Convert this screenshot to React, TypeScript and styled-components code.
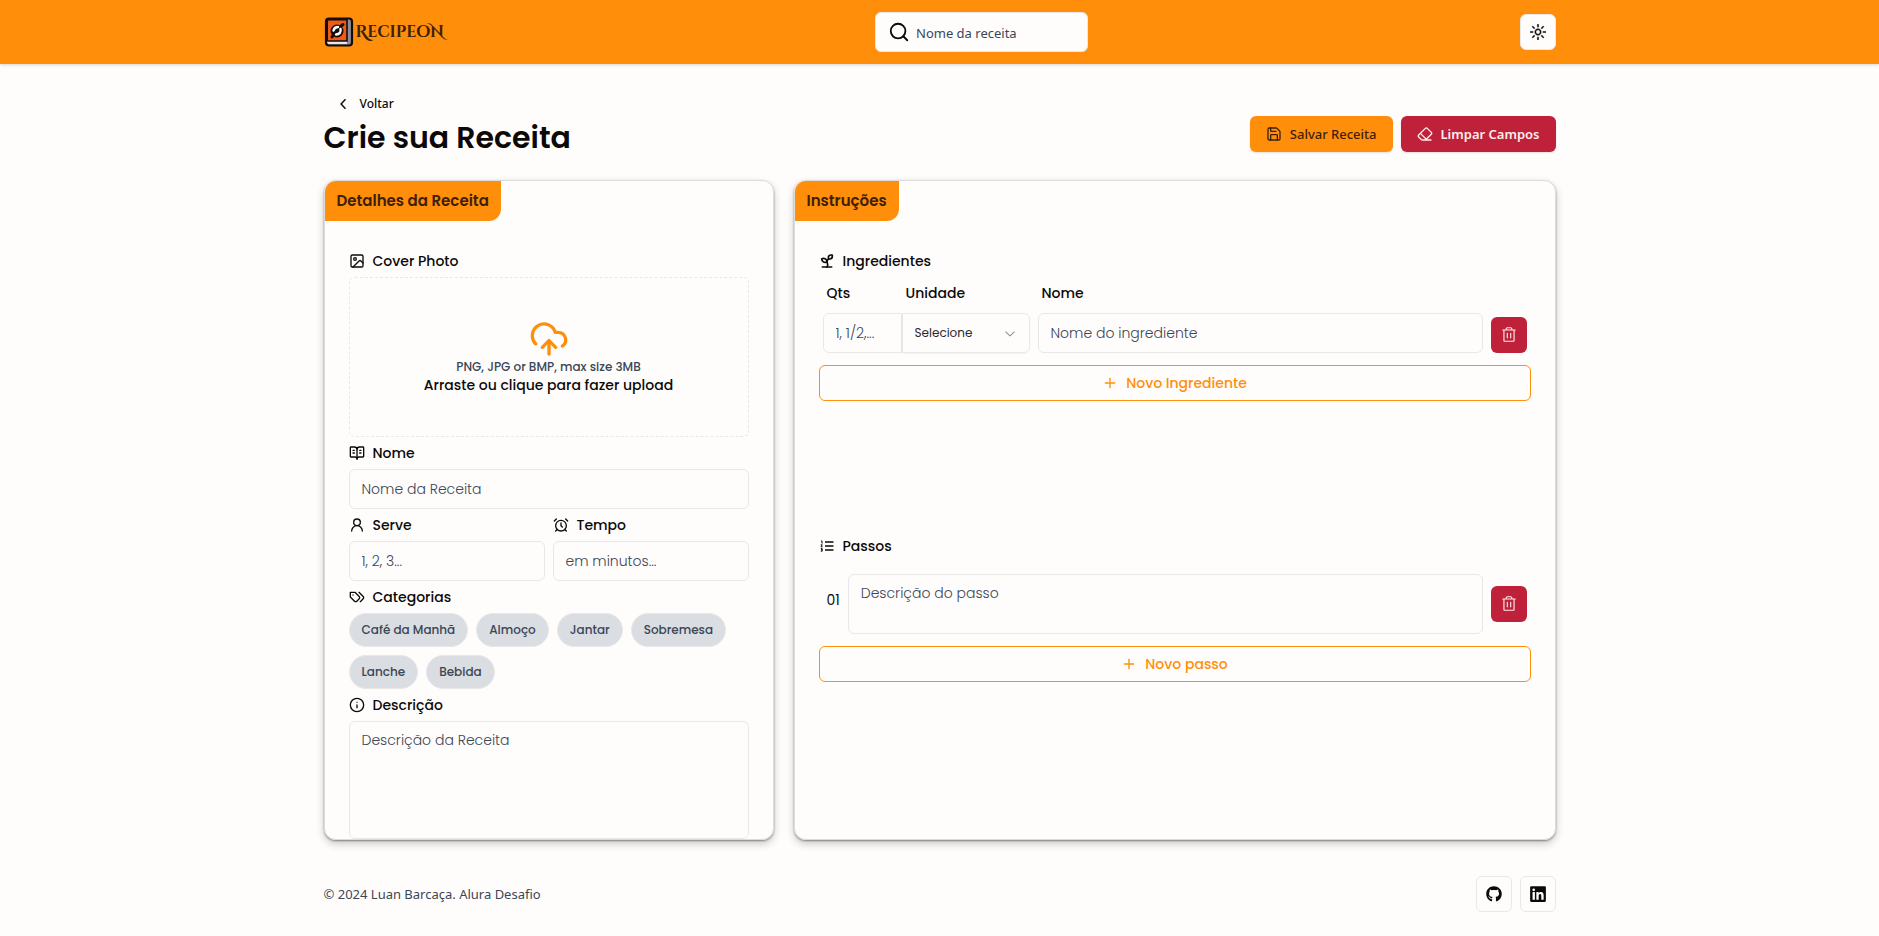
import React from "react";
import styled, { createGlobalStyle, css } from "styled-components";
import {
  AlarmClock,
  BookOpenText,
  CloudUpload,
  Eraser,
  Image as ImageIcon,
  Info,
  Plus,
  Save,
  Search,
  Sprout,
  UserRound,
} from "lucide-react";
import { RxChevronDown, RxChevronLeft, RxSun } from "react-icons/rx";
import { PiTrash } from "react-icons/pi";
import { FaGithub, FaLinkedin } from "react-icons/fa";

const color = {
  background: "#fffdfc",
  text: "#0c0a09",
  muted: "#3b4656",
  border: "#e9e8e8",
  primary: "#ff8f0b",
  onPrimary: "#3f2008",
  danger: "#be2139",
  onDanger: "#fdeeee",
  chip: "#dadde2",
};

const display = `Poppins, Inter, "Noto Sans", sans-serif`;
const ui = `"Segoe UI", "Noto Sans", sans-serif`;

const GlobalStyle = createGlobalStyle`
  *, *::before, *::after { box-sizing: border-box; }
  body {
    margin: 0;
    background: ${color.background};
    color: ${color.text};
    font-family: ${ui};
    font-size: 14px;
    line-height: 20px;
  }
  button, input, select, textarea { font: inherit; color: inherit; margin: 0; }
  button { cursor: pointer; }
  svg { flex-shrink: 0; display: block; }
  h1, h2, p { margin: 0; }
`;

const Container = styled.div`
  width: 100%;
  max-width: 1280px;
  margin: 0 auto;
  padding: 0 24px;
`;

const Header = styled.header`
  background: ${color.primary};
  box-shadow: 0 1px 3px rgba(0, 0, 0, 0.16);
`;

const HeaderBar = styled(Container)`
  display: flex;
  align-items: center;
  justify-content: space-between;
  height: 64px;
`;

const Brand = styled.a`
  display: flex;
  align-items: center;
  gap: 2px;
  width: 120px;
  color: ${color.onPrimary};
  text-decoration: none;
  font-family: "Cinzel Decorative", "Liberation Serif", serif;
  font-size: 16px;
  font-weight: 700;
`;

const SearchBox = styled.label`
  display: flex;
  align-items: center;
  gap: 6px;
  width: 213px;
  height: 40px;
  padding: 0 12px;
  border: 1px solid ${color.border};
  border-radius: 6px;
  background: ${color.background};
`;

const SearchInput = styled.input`
  min-width: 0;
  flex: 1;
  padding: 2px 0 0;
  border: 0;
  outline: 0;
  background: transparent;
  font-size: 13px;
  &::placeholder { color: ${color.muted}; opacity: 1; }
`;

const iconBox = css`
  display: flex;
  align-items: center;
  justify-content: center;
  width: 36px;
  height: 36px;
  flex-shrink: 0;
  padding: 0;
  border-radius: 6px;
`;

const IconButton = styled.button`
  ${iconBox}
  border: 1px solid ${color.border};
  background: ${color.background};
`;

const IconLink = styled.a`
  ${iconBox}
  border: 1px solid ${color.border};
  color: ${color.text};
`;

const DeleteButton = styled.button`
  ${iconBox}
  border: 0;
  background: ${color.danger};
  color: ${color.onDanger};
`;

const Heading = styled.div`
  display: flex;
  align-items: flex-end;
  justify-content: space-between;
  padding: 26px 0 22px;
`;

const BackLink = styled.a`
  display: flex;
  align-items: center;
  gap: 8px;
  height: 28px;
  padding-left: 12px;
  color: ${color.text};
  text-decoration: none;
  font-size: 12px;
  font-weight: 500;
`;

const Title = styled.h1`
  font-family: ${display};
  font-size: 30px;
  font-weight: 600;
  line-height: 40px;
`;

const Actions = styled.div`
  display: flex;
  gap: 8px;
`;

const HeadingActions = styled(Actions)`
  padding-bottom: 6px;
`;

const ActionButton = styled.button<{ $danger?: boolean }>`
  display: flex;
  align-items: center;
  gap: 8px;
  height: 36px;
  padding: 0 16px;
  border: 0;
  border-radius: 6px;
  box-shadow: 0 1px 2px rgba(0, 0, 0, 0.12);
  font-size: 13px;
  font-weight: ${(p) => (p.$danger ? 600 : 500)};
  background: ${(p) => (p.$danger ? color.danger : color.primary)};
  color: ${(p) => (p.$danger ? color.onDanger : color.onPrimary)};
`;

const Panels = styled.form`
  display: grid;
  grid-template-columns: 450fr 762fr;
  gap: 20px;
`;

const Card = styled.section`
  height: 660px;
  overflow: hidden;
  border: 1px solid #dcdcdc;
  border-radius: 12px;
  font-family: ${display};
  box-shadow: 0 1px 2px rgba(0, 0, 0, 0.4), 0 4px 8px rgba(0, 0, 0, 0.2);
`;

const CardTitle = styled.h2`
  width: fit-content;
  padding: 0 12px;
  border-bottom-right-radius: 12px;
  background: ${color.primary};
  color: ${color.onPrimary};
  font-size: 15px;
  font-weight: 600;
  line-height: 40px;
`;

const CardBody = styled.div`
  display: flex;
  flex-direction: column;
  gap: 4px;
  padding: 28px 24px 0;
`;

const Section = styled.div`
  height: 281px;
`;

const Label = styled.label`
  display: flex;
  align-items: center;
  gap: 8px;
  height: 24px;
  font-size: 14px;
  font-weight: 500;
`;

const Field = styled.div`
  display: flex;
  flex-direction: column;
  gap: 4px;
`;

const FieldPair = styled.div`
  display: grid;
  grid-template-columns: 1fr 1fr;
  gap: 8px;
`;

const inputLook = css`
  width: 100%;
  min-width: 0;
  padding: 0 12px;
  border: 1px solid ${color.border};
  border-radius: 6px;
  outline: 0;
  background: transparent;
  font-size: 14px;
  &::placeholder { color: ${color.muted}; opacity: 1; font-weight: 300; }
`;

const TextInput = styled.input`
  ${inputLook}
  height: 40px;
`;

const TextArea = styled.textarea<{ $height: number }>`
  ${inputLook}
  display: block;
  height: ${(p) => p.$height}px;
  padding-top: 8px;
  resize: none;
`;

const DropZone = styled.button`
  display: flex;
  flex-direction: column;
  align-items: center;
  justify-content: center;
  height: 160px;
  border: 1px dashed ${color.border};
  border-radius: 6px;
  background: transparent;
  font-size: 14px;
  font-weight: 500;
  line-height: 20px;
  svg { color: ${color.primary}; }
`;

const Hint = styled.span`
  color: ${color.muted};
  font-size: 12px;
  font-weight: 500;
  line-height: 16px;
`;

const Chips = styled.div`
  display: flex;
  flex-wrap: wrap;
  gap: 8px;
`;

const Chip = styled.button`
  height: 34px;
  padding: 0 12px;
  border: 1px solid ${color.border};
  border-radius: 17px;
  background: ${color.chip};
  color: ${color.muted};
  font-size: 12px;
  font-weight: 500;
`;

const ingredientColumns = css`
  display: grid;
  grid-template-columns: 79px 128px 1fr 36px;
`;

const ColumnLabels = styled.div`
  ${ingredientColumns}
  padding: 8px;
  font-size: 14px;
  font-weight: 500;
  line-height: 24px;
  span:last-child { padding-left: 8px; }
`;

const IngredientRow = styled.div`
  ${ingredientColumns}
  align-items: end;
  padding: 0 4px 12px;
`;

const QuantityInput = styled(TextInput)`
  border-radius: 6px 0 0 6px;
`;

const SelectWrap = styled.div`
  display: grid;
  align-items: center;
  svg {
    grid-area: 1 / 1;
    justify-self: end;
    margin-right: 12px;
    color: #8a8a8a;
    pointer-events: none;
  }
`;

const UnitSelect = styled.select`
  grid-area: 1 / 1;
  width: 100%;
  height: 40px;
  padding: 0 12px;
  appearance: none;
  border: 1px solid ${color.border};
  border-radius: 0 6px 6px 0;
  box-shadow: 0 1px 2px rgba(0, 0, 0, 0.05);
  background: transparent;
  color: #2b2929;
  font-size: 12px;
`;

const NameCell = styled.div`
  padding: 0 8px;
`;

const StepRow = styled.div`
  display: flex;
  align-items: center;
  gap: 8px;
  padding: 16px 4px 12px;
`;

const StepNumber = styled.span`
  width: 18px;
  padding: 0 0 8px 4px;
  font-weight: 400;
  font-size: 14px;
`;

const AddButton = styled.button`
  display: flex;
  align-items: center;
  justify-content: center;
  gap: 8px;
  width: 100%;
  height: 36px;
  border: 1px solid ${color.primary};
  border-radius: 6px;
  background: transparent;
  color: ${color.primary};
  font-size: 14px;
  font-weight: 500;
`;

const Footer = styled.footer`
  display: flex;
  align-items: center;
  justify-content: space-between;
  padding: 36px 0 24px;
  color: ${color.muted};
  font-size: 13px;
`;

function BookLogo() {
  return (
    <svg width="30" height="30" viewBox="0 0 30 30" aria-hidden="true">
      <rect x="2" y="1.500" width="26" height="27" rx="3" fill="#8f8d9b" stroke="#140d0b" strokeWidth="2.200" />
      <path d="M3 24h20v3H4.500q-1.500-1-1.500-3z" fill="#e8e5ee" />
      <path d="M3.200 24V4.500q0-1.800 1.800-1.800h18V24z" fill="#f15a16" stroke="#140d0b" strokeWidth="1.600" />
      <circle cx="13" cy="14" r="6.500" fill="#140d0b" />
      <path d="M8 20l2-3M17 9l2-1.500" stroke="#140d0b" strokeWidth="3" strokeLinecap="round" />
      <path d="M9.500 13.500q.8-3.500 4.500-3.500M16.500 12q1 5-4.500 5.500" fill="none" stroke="#fff" strokeWidth="2.400" strokeLinecap="round" />
    </svg>
  );
}

function TagsIcon() {
  return (
    <svg
      width="16"
      height="16"
      viewBox="0 0 24 24"
      fill="none"
      stroke="currentColor"
      strokeWidth="2"
      strokeLinecap="round"
      strokeLinejoin="round"
      aria-hidden="true"
    >
      <path d="M9 5H2v7l6.290 6.290c.940.940 2.480.940 3.420 0l3.580-3.580c.940-.940.940-2.480 0-3.420L9 5Z" />
      <path d="M6 9.010V9" />
      <path d="m15 5 6.300 6.300a2.400 2.400 0 0 1 0 3.400L17 19" />
    </svg>
  );
}

function NumberedListIcon() {
  return (
    <svg width="16" height="16" viewBox="0 0 16 16" fill="none" stroke="currentColor" aria-hidden="true">
      <path d="M6 4h8.500M6 8h8.500M6 12h8.500" strokeWidth="1.700" />
      <path d="M2 3h1v2.500M1.800 6.800h1.400L2 8.800h1.500M1.800 10.600h1.400v1.200H2.200h1v1.400H1.800" strokeWidth="1" />
    </svg>
  );
}

const categories = ["Café da Manhã", "Almoço", "Jantar", "Sobremesa", "Lanche", "Bebida"];

export default function App() {
  return (
    <>
      <GlobalStyle />
      <Header>
        <HeaderBar>
          <Brand href="#">
            <BookLogo />
            <span>RecipeoN</span>
          </Brand>
          <SearchBox>
            <Search size={22} strokeWidth={2} />
            <SearchInput type="text" placeholder="Nome da receita" aria-label="Nome da receita" />
          </SearchBox>
          <IconButton type="button" aria-label="Tema">
            <RxSun size={16} stroke="currentColor" strokeWidth={0.5} />
          </IconButton>
        </HeaderBar>
      </Header>

      <Container as="main">
        <Heading>
          <div>
            <BackLink href="#">
              <RxChevronLeft size={16} stroke="currentColor" strokeWidth={0.5} />
              Voltar
            </BackLink>
            <Title>Crie sua Receita</Title>
          </div>
          <HeadingActions>
            <ActionButton type="submit" form="recipe">
              <Save size={16} strokeWidth={2} />
              Salvar Receita
            </ActionButton>
            <ActionButton type="reset" form="recipe" $danger>
              <Eraser size={16} strokeWidth={2} />
              Limpar Campos
            </ActionButton>
          </HeadingActions>
        </Heading>

        <Panels id="recipe">
          <Card>
            <CardTitle>Detalhes da Receita</CardTitle>
            <CardBody>
              <Field>
                <Label as="div" id="cover">
                  <ImageIcon size={16} />
                  Cover Photo
                </Label>
                <DropZone type="button" aria-labelledby="cover">
                  <CloudUpload size={40} />
                  <Hint>PNG, JPG or BMP, max size 3MB</Hint>
                  Arraste ou clique para fazer upload
                </DropZone>
              </Field>
              <Field>
                <Label htmlFor="name">
                  <BookOpenText size={16} />
                  Nome
                </Label>
                <TextInput id="name" placeholder="Nome da Receita" />
              </Field>
              <FieldPair>
                <Field>
                  <Label htmlFor="serves">
                    <UserRound size={16} />
                    Serve
                  </Label>
                  <TextInput id="serves" placeholder="1, 2, 3..." />
                </Field>
                <Field>
                  <Label htmlFor="time">
                    <AlarmClock size={16} />
                    Tempo
                  </Label>
                  <TextInput id="time" placeholder="em minutos..." />
                </Field>
              </FieldPair>
              <Field>
                <Label as="div">
                  <TagsIcon />
                  Categorias
                </Label>
                <Chips>
                  {categories.map((name) => (
                    <Chip type="button" key={name}>{name}</Chip>
                  ))}
                </Chips>
              </Field>
              <Field>
                <Label htmlFor="description">
                  <Info size={16} />
                  Descrição
                </Label>
                <TextArea id="description" $height={118} placeholder="Descrição da Receita" />
              </Field>
            </CardBody>
          </Card>

          <Card>
            <CardTitle>Instruções</CardTitle>
            <CardBody>
              <Section>
                <Label as="div">
                  <Sprout size={16} strokeWidth={2.5} />
                  Ingredientes
                </Label>
                <ColumnLabels>
                  <span>Qts</span>
                  <span>Unidade</span>
                  <span>Nome</span>
                </ColumnLabels>
                <IngredientRow>
                  <QuantityInput placeholder="1, 1/2,..." aria-label="Qts" />
                  <SelectWrap>
                    <UnitSelect aria-label="Unidade">
                      <option>Selecione</option>
                    </UnitSelect>
                    <RxChevronDown size={16} />
                  </SelectWrap>
                  <NameCell>
                    <TextInput placeholder="Nome do ingrediente" aria-label="Nome" />
                  </NameCell>
                  <DeleteButton type="button" aria-label="Remover ingrediente">
                    <PiTrash size={18} />
                  </DeleteButton>
                </IngredientRow>
                <AddButton type="button">
                  <Plus size={16} />
                  Novo Ingrediente
                </AddButton>
              </Section>
              <div>
                <Label as="div">
                  <NumberedListIcon />
                  Passos
                </Label>
                <StepRow>
                  <StepNumber>01</StepNumber>
                  <TextArea $height={60} placeholder="Descrição do passo" aria-label="Passo 01" />
                  <DeleteButton type="button" aria-label="Remover passo">
                    <PiTrash size={18} />
                  </DeleteButton>
                </StepRow>
                <AddButton type="button">
                  <Plus size={16} />
                  Novo passo
                </AddButton>
              </div>
            </CardBody>
          </Card>
        </Panels>

        <Footer>
          <p>© 2024 Luan Barcaça. Alura Desafio</p>
          <Actions>
            <IconLink href="#" aria-label="GitHub">
              <FaGithub size={16} />
            </IconLink>
            <IconLink href="#" aria-label="LinkedIn">
              <FaLinkedin size={18} />
            </IconLink>
          </Actions>
        </Footer>
      </Container>
    </>
  );
}
